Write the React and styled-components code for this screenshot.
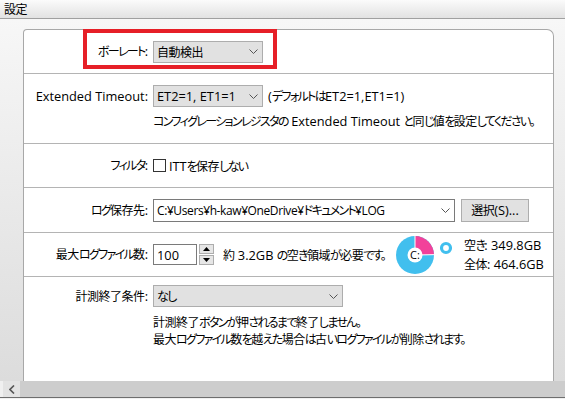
import React from 'react';
import styled, { createGlobalStyle } from 'styled-components';

const Global = createGlobalStyle`
  html, body { margin: 0; padding: 0; }
  body {
    font-family: "Open Sans", "Noto Sans CJK JP", sans-serif;
    font-size: 12.8px;
    color: #000;
    font-feature-settings: "palt";
  }
`;

/* Japanese runs: narrower, like Meiryo UI's proportional kana */
const Kana = styled.span`
  font-size: 12px;
  letter-spacing: -1.65px;
`;
const Kanji = styled.span`
  font-size: 12px;
  letter-spacing: -0.5px;
`;

const SPLIT = /([\u3000-\u30ff\uff00-\uff5e]+|[\u3400-\u9fff]+)/;
const KANA = /^[\u3000-\u30ff\uff00-\uff5e]+$/;
const KANJI = /^[\u3400-\u9fff]+$/;

const T = ({ children }) => {
  const parts = String(children).split(SPLIT);
  return (
    <>
      {parts.map((s, i) =>
        s === '' ? null : KANA.test(s) ? (
          <Kana key={i}>{s}</Kana>
        ) : KANJI.test(s) ? (
          <Kanji key={i}>{s}</Kanji>
        ) : (
          <React.Fragment key={i}>{s}</React.Fragment>
        )
      )}
    </>
  );
};

const Window = styled.div`
  width: 565px;
  height: 399px;
  display: flex;
  flex-direction: column;
  overflow: hidden;
  background: #f0f0f0;
`;

const TitleBar = styled.div`
  flex: none;
  height: 18px;
  line-height: 18px;
  padding-left: 4px;
  border-bottom: 1px solid #a0a0a0;
  background: linear-gradient(#fbfbfb, #e2e2e2);
`;

const Body = styled.div`
  position: relative;
  flex: 1;
  min-height: 0;
  display: flex;
  padding: 10px 11px 0 23px;
  background: linear-gradient(#f7f7f7, #dcdcdc);
`;

const Panel = styled.div`
  flex: 1;
  display: flex;
  flex-direction: column;
  background: #fff;
  border: 1px solid #a8a8a8;
  border-bottom: none;
  border-radius: 4px 7px 0 0;
  overflow: hidden;
`;

const Row = styled.div`
  flex: none;
  display: grid;
  grid-template-columns: 124px 1fr;
  column-gap: 5px;
  align-items: ${p => (p.$top ? 'start' : 'center')};
  height: ${p => (p.$h ? `${p.$h}px` : 'auto')};
  padding-top: ${p => p.$pt || 0}px;
  box-sizing: border-box;
  border-bottom: ${p => (p.$last ? 'none' : '1px solid #b4b4b4')};
`;

const Label = styled.div`
  text-align: right;
  white-space: nowrap;
  line-height: 22px;
`;

const Cell = styled.div`
  display: flex;
  flex-direction: ${p => (p.$col ? 'column' : 'row')};
  align-items: ${p => (p.$col ? 'flex-start' : 'center')};
  min-width: 0;
`;

const Line = styled.div`
  display: flex;
  align-items: center;
`;

const Select = styled.div`
  width: ${p => p.$w}px;
  height: 22px;
  box-sizing: border-box;
  border: 1px solid #adadad;
  background: #e1e1e1;
  display: flex;
  align-items: center;
  justify-content: space-between;
  padding: 0 4px 0 3px;
  white-space: nowrap;
`;

const Combo = styled(Select)`
  height: 23px;
  background: #fff;
  border-color: #7a7a7a;
  font-size: 12px;
  letter-spacing: -0.4px;
`;

const Button = styled.div`
  margin-left: 6px;
  width: 68px;
  height: 23px;
  box-sizing: border-box;
  border: 1px solid #adadad;
  background: #e1e1e1;
  display: flex;
  align-items: center;
  justify-content: center;
`;

const Note = styled.span`
  margin-left: ${p => p.$ml || 0}px;
  white-space: nowrap;
`;

const Help = styled.div`
  margin-top: ${p => p.$mt || 0}px;
  line-height: 16px;
  white-space: nowrap;
`;

const Check = styled.span`
  width: 13px;
  height: 13px;
  box-sizing: border-box;
  border: 1px solid #333;
  background: #fff;
  margin-right: 3px;
`;

const NumInput = styled.div`
  width: 44px;
  height: 21px;
  box-sizing: border-box;
  border: 1px solid #7a7a7a;
  background: #fff;
  padding-left: 3px;
  display: flex;
  align-items: center;
`;

const Spin = styled.div`
  margin-left: 2px;
  display: flex;
  flex-direction: column;
  gap: 1px;
`;

const SpinBtn = styled.div`
  width: 15px;
  height: 10px;
  box-sizing: border-box;
  border: 1px solid #adadad;
  background: #e6e6e6;
  display: flex;
  align-items: center;
  justify-content: center;
`;

const Stats = styled.div`
  margin-left: 11px;
  display: flex;
  flex-direction: column;
  line-height: 19px;
  white-space: nowrap;
`;

const Highlight = styled.div`
  position: absolute;
  left: 83px;
  top: 10px;
  width: 194px;
  height: 40px;
  box-sizing: border-box;
  border: 4px solid #e61f27;
  pointer-events: none;
`;

const HScroll = styled.div`
  flex: none;
  height: 16px;
  margin-left: 3px;
  background: #cdcdcd;
  display: flex;
`;

const ScrollArrow = styled.div`
  width: 17px;
  height: 16px;
  background: #e3e3e3;
  display: flex;
  align-items: center;
  justify-content: center;
`;

const BottomEdge = styled.div`
  flex: none;
  height: 2px;
  border-top: 1px solid #6e6e6e;
  box-sizing: border-box;
  background: #f0f0f0;
`;

const Chevron = () => (
  <svg width="9" height="5" viewBox="0 0 9 5">
    <path d="M0.5 0.5 L4.5 4.5 L8.5 0.5" fill="none" stroke="#555" strokeWidth="1" />
  </svg>
);

const Tri = ({ up }) => (
  <svg width="7" height="4" viewBox="0 0 7 4">
    <path d={up ? 'M0 4 L3.5 0 L7 4 Z' : 'M0 0 L3.5 4 L7 0 Z'} fill="#000" />
  </svg>
);

const Pie = () => {
  const cx = 20, cy = 20, r = 19;
  const used = (464.6 - 349.8) / 464.6;
  const a = -Math.PI / 2 + used * 2 * Math.PI;
  const ex = cx + r * Math.cos(a);
  const ey = cy + r * Math.sin(a);
  return (
    <svg width="40" height="40" viewBox="0 0 40 40" style={{ marginLeft: 10 }}>
      <circle cx={cx} cy={cy} r={r} fill="#41bfee" />
      <path d={`M${cx} ${cy} L${cx} ${cy - r} A${r} ${r} 0 0 1 ${ex} ${ey} Z`} fill="#f2419a" />
      <line x1={cx} y1={cy} x2={cx} y2={cy - r} stroke="#fff" strokeWidth="1" />
      <line x1={cx} y1={cy} x2={ex} y2={ey} stroke="#fff" strokeWidth="1" />
      <circle cx={cx} cy={cy} r="7.5" fill="#fff" />
      <text x={cx} y={cy + 4} fontSize="11" textAnchor="middle" fontFamily="Open Sans, sans-serif" fill="#000">C:</text>
    </svg>
  );
};

const Ring = () => (
  <svg width="14" height="14" viewBox="0 0 14 14" style={{ marginLeft: 4, alignSelf: 'flex-start', marginTop: 6 }}>
    <circle cx="7" cy="7" r="4.5" fill="none" stroke="#41bfee" strokeWidth="3.2" />
  </svg>
);

export default function App() {
  return (
    <>
      <Global />
      <Window>
        <TitleBar><T>設定</T></TitleBar>
        <Body>
          <Panel>
            <Row $h={44}>
              <Label><T>ボーレート:</T></Label>
              <Cell>
                <Select $w={110}>
                  <span><T>自動検出</T></span>
                  <Chevron />
                </Select>
              </Cell>
            </Row>
            <Row $h={70} $top $pt={11}>
              <Label>Extended Timeout:</Label>
              <Cell $col>
                <Line>
                  <Select $w={110}>
                    <span>ET2=1, ET1=1</span>
                    <Chevron />
                  </Select>
                  <Note $ml={5}><T>(デフォルトはET2=1,ET1=1)</T></Note>
                </Line>
                <Help $mt={6}><T>コンフィグレーションレジスタの Extended Timeout と同じ値を設定してください。</T></Help>
              </Cell>
            </Row>
            <Row $h={44}>
              <Label><T>フィルタ:</T></Label>
              <Cell>
                <Check />
                <span><T>ITTを保存しない</T></span>
              </Cell>
            </Row>
            <Row $h={45}>
              <Label><T>ログ保存先:</T></Label>
              <Cell>
                <Combo $w={302}>
                  <span><T>C:¥Users¥h-kaw¥OneDrive¥ドキュメント¥LOG</T></span>
                  <Chevron />
                </Combo>
                <Button><T>選択(S)...</T></Button>
              </Cell>
            </Row>
            <Row $h={44}>
              <Label><T>最大ログファイル数:</T></Label>
              <Cell>
                <NumInput>100</NumInput>
                <Spin>
                  <SpinBtn><Tri up /></SpinBtn>
                  <SpinBtn><Tri /></SpinBtn>
                </Spin>
                <Note $ml={9}><T>約 3.2GB の空き領域が必要です。</T></Note>
                <Pie />
                <Ring />
                <Stats>
                  <span><T>空き: 349.8GB</T></span>
                  <span><T>全体: 464.6GB</T></span>
                </Stats>
              </Cell>
            </Row>
            <Row $top $pt={8} $last>
              <Label><T>計測終了条件:</T></Label>
              <Cell $col>
                <Select $w={190}>
                  <span><T>なし</T></span>
                  <Chevron />
                </Select>
                <Help $mt={7}>
                  <T>計測終了ボタンが押されるまで終了しません。</T>
                  <br />
                  <T>最大ログファイル数を越えた場合は古いログファイルが削除されます。</T>
                </Help>
              </Cell>
            </Row>
          </Panel>
          <Highlight />
        </Body>
        <HScroll>
          <ScrollArrow>
            <svg width="6" height="9" viewBox="0 0 6 9">
              <path d="M5 0.5 L1 4.5 L5 8.5" fill="none" stroke="#555" strokeWidth="1.6" />
            </svg>
          </ScrollArrow>
        </HScroll>
        <BottomEdge />
      </Window>
    </>
  );
}
